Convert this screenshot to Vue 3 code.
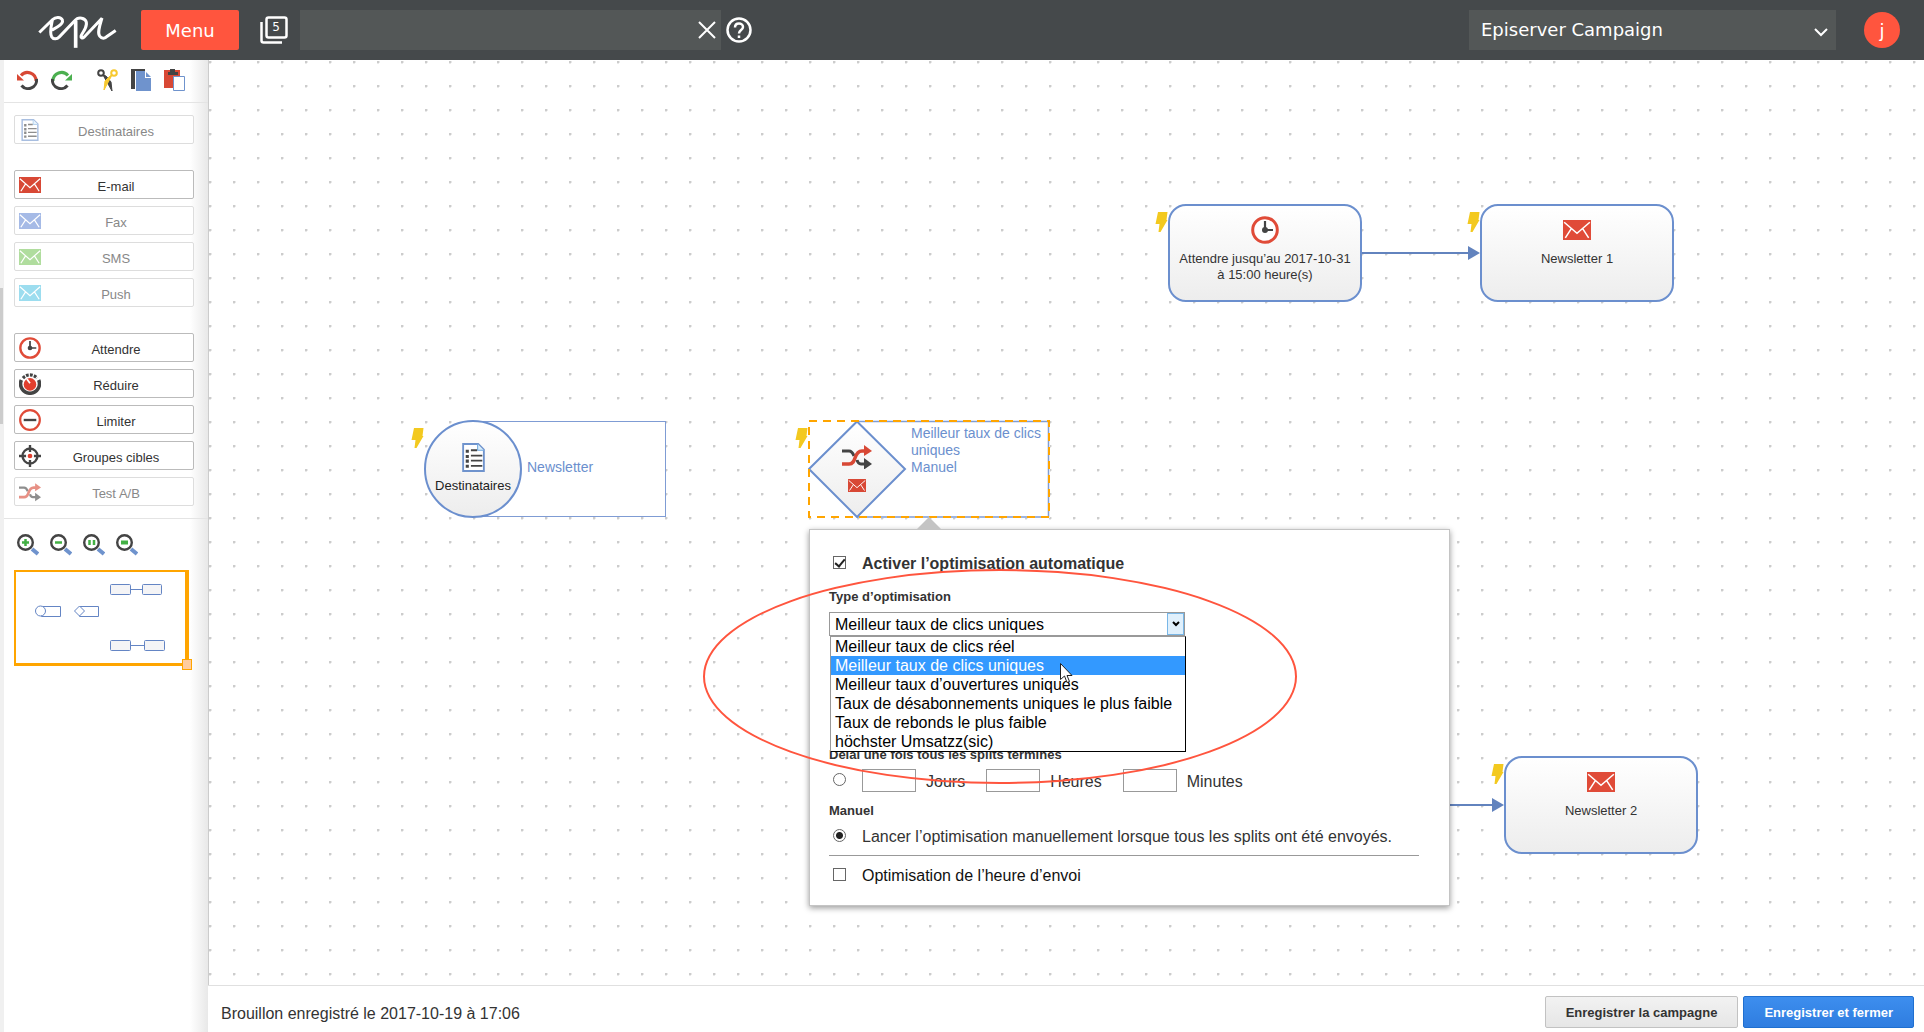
<script setup>
import { ref } from 'vue'

const channels = [
  { label: 'E-mail', kind: 'mail', color: '#d84835' },
  { label: 'Fax', kind: 'mail', color: '#a5bae6', disabled: true },
  { label: 'SMS', kind: 'mail', color: '#b0dd9e', disabled: true },
  { label: 'Push', kind: 'mail', color: '#9cddef', disabled: true },
]
const steps = [
  { label: 'Attendre', kind: 'clock' },
  { label: 'Réduire', kind: 'knob' },
  { label: 'Limiter', kind: 'minus' },
  { label: 'Groupes cibles', kind: 'target' },
  { label: 'Test A/B', kind: 'shuffle', disabled: true },
]
const groups = [
  [{ label: 'Destinataires', kind: 'doc', disabled: true }],
  channels,
  steps,
]
const zooms = [
  { label: 'Zoom avant', kind: 'plus' },
  { label: 'Zoom arrière', kind: 'minus' },
  { label: 'Taille réelle', kind: 'actual' },
  { label: 'Ajuster', kind: 'fit' },
]
const boxes = [
  { x: 959, y: 144, kind: 'clock', text: 'Attendre jusqu’au 2017-10-31 à 15:00 heure(s)' },
  { x: 1271, y: 144, kind: 'mail', text: 'Newsletter 1' },
  { x: 1295, y: 696, kind: 'mail', text: 'Newsletter 2' },
]
const bolts = [
  { x: 946, y: 152 },
  { x: 1258, y: 152 },
  { x: 1282, y: 704 },
  { x: 202, y: 368 },
  { x: 586, y: 368 },
]
const arrows = [
  { x: 1153, y: 186, w: 118 },
  { x: 1177, y: 738, w: 118 },
]
const options = [
  'Meilleur taux de clics réel',
  'Meilleur taux de clics uniques',
  'Meilleur taux d’ouvertures uniques',
  'Taux de désabonnements uniques le plus faible',
  'Taux de rebonds le plus faible',
  'höchster Umsatzz(sic)',
]
const optimisation = ref(options[1])
const automatic = ref(true)
const sendTime = ref(false)
const trigger = ref('manual')
const units = ['Jours', 'Heures', 'Minutes']
const query = ref('')
</script>

<template>
  <div class="app">
    <svg class="symbols" aria-hidden="true">
      <symbol id="mail" viewBox="0 0 24 18" preserveAspectRatio="none">
        <rect width="24" height="18" fill="currentColor" />
        <path d="M1 2l11 10L23 2M2 16l5-8M22 16l-5-8" fill="none" stroke="#fff" stroke-width="1.3" />
      </symbol>
      <symbol id="clock" viewBox="0 0 28 28">
        <circle cx="14" cy="14" r="12.3" fill="#fff" stroke="#e04b38" stroke-width="3" />
        <path d="M14 5v9h8" fill="none" stroke="#444" stroke-width="2.2" />
        <circle cx="14" cy="14" r="3" fill="#444" />
      </symbol>
      <symbol id="knob" viewBox="0 0 28 28">
        <path d="M3 9a12 12 0 1 0 22 0" fill="none" stroke="#444" stroke-width="4.500" />
        <path d="M5 6.500a12 12 0 0 1 18 0" fill="none" stroke="#444" stroke-width="4" stroke-dasharray="3.500 1.500" />
        <circle cx="14" cy="14.500" r="8" fill="#e23f2e" />
        <path d="M10 7.500l4 5.500" stroke="#fff" stroke-width="2.200" />
      </symbol>
      <symbol id="minus" viewBox="0 0 28 28">
        <circle cx="14" cy="14" r="12.5" fill="#fff" stroke="#e04b38" stroke-width="2.800" />
        <path d="M6 14h16" stroke="#444" stroke-width="3" />
      </symbol>
      <symbol id="target" viewBox="0 0 28 28">
        <circle cx="14" cy="14" r="9.500" fill="#fff" stroke="#444" stroke-width="3" />
        <path d="M14 0v9M14 19v9M0 14h9M19 14h9" stroke="#444" stroke-width="3" />
        <circle cx="14" cy="14" r="3" fill="#e23f2e" />
      </symbol>
      <symbol id="shuffle" viewBox="0 0 30 24">
        <path d="M0 6h7q3 0 5 5M15 15q1 4 4 4h5" fill="none" stroke="#444" stroke-width="3" />
        <path d="M22 13l8 6-8 5.500z" fill="#444" />
        <path d="M0 19h7c4 0 5-3 6-6s3-7 7-7h4" fill="none" stroke="#d84835" stroke-width="3.500" />
        <path d="M22 0l8 6-8 5z" fill="#d84835" />
      </symbol>
      <symbol id="doc" viewBox="0 0 22 28">
        <path d="M1 1h14.500l5.500 5.500V27H1z" fill="#fff" stroke="#6f93cd" stroke-width="1.800" />
        <path d="M15 1v6h6" fill="#d9eefb" stroke="#6fa8e0" />
        <path d="M8.500 7h6M8.500 12.300h11M8.500 17h11M8.500 22h11" stroke="#444" stroke-width="1.700" />
        <path d="M3.500 8h3M3.500 13h3M3.500 17.500h3M3.500 22.500h3" stroke="#444" stroke-width="3" />
      </symbol>
      <symbol id="bolt" viewBox="0 0 12 20">
        <path d="M2.500 0H12l-1 8h1L5 20H3l1-8H0z" fill="#f3c91f" />
      </symbol>
    </svg>

    <header class="topbar">
      <a class="logo" href="#" aria-label="Episerver">
        <svg viewBox="24 28 240 104" width="80" height="35" fill="none" stroke="#fff" stroke-width="9">
          <path d="M28 83L68 44c9-9 25-8 29 1 3 9-4 15-14 21L66 76M67 46c-3 16-9 38-2 50 6 9 16 7 23 0L134 48c5-6 12-10 21-8 14 3 18 14 11 30-4 10-11 17-13 24-1 5 4 8 9 3L216 40c-6 20-15 44-7 54 7 9 16 7 23 0l25-17" />
          <path d="M137 48V129" stroke-width="11" />
        </svg>
      </a>
      <button class="menu" type="button">Menu</button>
      <button class="bare tabs" type="button" aria-label="Onglets">
        <svg viewBox="0 0 28 28" width="28" height="28" fill="none" stroke="#fff" stroke-width="2.500">
          <rect x="6.500" y="1.500" width="20" height="20" rx="2" />
          <path d="M1.500 6v18.500q0 2 2 2H22" />
        </svg>
        <span>5</span>
      </button>
      <div class="search">
        <input v-model="query" type="text" aria-label="Recherche">
        <button class="bare" type="button" aria-label="Effacer">
          <svg viewBox="0 0 18 18" width="18" height="18" stroke="#fff" stroke-width="2"><path d="M1 1l16 16M17 1L1 17" /></svg>
        </button>
      </div>
      <button class="bare help" type="button" aria-label="Aide">
        <svg viewBox="0 0 26 26" width="26" height="26" fill="none" stroke="#fff" stroke-width="2.500">
          <circle cx="13" cy="13" r="11.500" />
          <path d="M9 10.500c0-5.500 8-5 8-.5 0 3-4 3-4 6.500" />
          <path d="M13 18.500v2.500" />
        </svg>
      </button>
      <div class="product">
        <select aria-label="Produit"><option>Episerver Campaign</option></select>
        <svg viewBox="0 0 14 9" width="14" height="9" fill="none" stroke="#fff" stroke-width="2"><path d="M1 1l6 6 6-6" /></svg>
      </div>
      <button class="avatar" type="button">j</button>
    </header>

    <div class="body">
      <aside class="sidebar">
        <div class="tools">
          <button class="bare" type="button" aria-label="Annuler">
            <svg viewBox="0 0 21 21" width="21" height="21" fill="none" stroke-width="3">
              <path d="M4 5.500a8.500 8.500 0 0 1 15 5.500" stroke="#d84835" /><path d="M19.500 9a8.500 8.500 0 0 1-15 6.500" stroke="#444" />
              <path d="M0 4v6.500h7z" fill="#d84835" />
            </svg>
          </button>
          <button class="bare" type="button" aria-label="Rétablir">
            <svg viewBox="0 0 21 21" width="21" height="21" fill="none" stroke-width="3">
              <path d="M17 5.500a8.500 8.500 0 0 0-15 5.500" stroke="#4cb050" /><path d="M1.500 9a8.500 8.500 0 0 0 15 6.500" stroke="#444" />
              <path d="M21 4v6.500h-7z" fill="#4cb050" />
            </svg>
          </button>
          <button class="bare cut" type="button" aria-label="Couper">
            <svg viewBox="0 0 21 22" width="21" height="22" fill="none">
              <path d="M6 6l9 16-1-9-5-6z" fill="#444" stroke="#444" />
              <path d="M15 6L7 21l1-9 5-5z" fill="#f7c92f" stroke="#f7c92f" />
              <circle cx="4" cy="4" r="2.800" stroke="#444" stroke-width="2" /><circle cx="17" cy="4" r="2.800" stroke="#f7c92f" stroke-width="2" />
            </svg>
          </button>
          <button class="bare" type="button" aria-label="Copier">
            <svg viewBox="0 0 20 22" width="20" height="22">
              <path d="M0 0h14v2H4v18H0z" fill="#444" /><path d="M5 2h9v7h6v13H5z" fill="#6f93cd" /><path d="M15 3l5 5h-5z" fill="#6f93cd" />
            </svg>
          </button>
          <button class="bare" type="button" aria-label="Coller">
            <svg viewBox="0 0 21 22" width="21" height="22">
              <path d="M0 1h16v18H0z" fill="#d84835" /><path d="M4 3h2V0h5v3h3v3H4z" fill="#444" /><path d="M9.500 7.500h11v14h-11z" fill="#fff" stroke="#6f93cd" />
            </svg>
          </button>
        </div>

        <div class="palette">
          <div v-for="(group, g) in groups" :key="g" class="group">
            <button v-for="item in group" :key="item.label" class="item" type="button" :disabled="item.disabled">
              <svg :class="['item-icon', item.kind]" :style="{ color: item.color }"><use :href="'#' + item.kind" /></svg>
              <span>{{ item.label }}</span>
            </button>
          </div>
        </div>

        <div class="overview">
          <div class="zooms">
            <button v-for="z in zooms" :key="z.label" class="bare" type="button" :aria-label="z.label">
              <svg viewBox="0 0 22 22" width="22" height="22">
                <path d="M15 15l6 5" stroke="#6f93cd" stroke-width="4" />
                <circle cx="8.500" cy="8.500" r="7.300" fill="#fff" stroke="#444" stroke-width="2.400" />
                <g stroke="#43b045" stroke-width="2.500">
                  <path v-if="z.kind === 'plus'" d="M5 8.500h7M8.500 5v7" />
                  <path v-else-if="z.kind === 'minus'" d="M5 8.500h7" />
                  <path v-else-if="z.kind === 'actual'" d="M6.500 6v5M11 6v5" />
                  <path v-else stroke-width="4" d="M5 8.500h7" />
                </g>
              </svg>
            </button>
          </div>
          <div class="minimap">
            <svg viewBox="16 572 169 91" width="169" height="91" fill="#fff" stroke="#6485c4">
              <path d="M41.500 606.500h19v10h-19zM79.500 606.500h19v10h-19z" />
              <circle cx="40.500" cy="611" r="5" /><path d="M74.500 611l5-5 5 5-5 5z" />
              <path d="M131 589.500h11M131 645.500h13" />
              <g fill="#f4f4f6">
                <rect x="110.500" y="584.500" width="20" height="10" rx="1" /><rect x="142.500" y="584.500" width="19" height="10" rx="1" />
                <rect x="110.500" y="640.500" width="20" height="10" rx="1" /><rect x="144.500" y="640.500" width="20" height="10" rx="1" />
              </g>
            </svg>
            <span class="handle"></span>
          </div>
        </div>
      </aside>

      <main class="workspace">
        <div class="canvas">
          <svg v-for="a in arrows" :key="a.y" class="arrow" :width="a.w" height="14" :style="{ left: a.x + 'px', top: a.y + 'px' }">
            <path :d="`M0 7H${a.w - 10}`" stroke="#6283be" stroke-width="2" />
            <path :d="`M${a.w - 12} 0L${a.w} 7L${a.w - 12} 14z`" fill="#6283be" />
          </svg>
          <svg v-for="b in bolts" :key="b.x" class="bolt" :style="{ left: b.x + 'px', top: b.y + 'px' }"><use href="#bolt" /></svg>
          <div v-for="b in boxes" :key="b.x" class="box" :style="{ left: b.x + 'px', top: b.y + 'px' }">
            <svg :class="['box-icon', b.kind]"><use :href="'#' + b.kind" /></svg>
            <p>{{ b.text }}</p>
          </div>

          <div class="start">
            <div class="disc">
              <svg class="doc"><use href="#doc" /></svg>
              <p>Destinataires</p>
            </div>
            <p class="note">Newsletter</p>
          </div>

          <div class="split">
            <svg class="split-shape" viewBox="0 0 242 98" width="242" height="98" fill="none">
              <defs><linearGradient id="shade" x2="0" y2="1"><stop stop-color="#fff" /><stop offset="1" stop-color="#ededed" /></linearGradient></defs>
              <path d="M49 1.500H240.500V97H49" stroke="#7f9cd4" stroke-width="1.500" />
              <path d="M49 1.500L97 49 49 97 1 49z" fill="url(#shade)" stroke="#6b8fce" stroke-width="2" />
              <rect x="1" y="1" width="240" height="96" stroke="#ffa500" stroke-width="2" stroke-dasharray="8 6" />
            </svg>
            <div class="diamond">
              <svg class="shuffle"><use href="#shuffle" /></svg>
              <svg class="mail"><use href="#mail" /></svg>
            </div>
            <p>Meilleur taux de clics uniques<br>Manuel</p>
          </div>

          <form class="popover" @submit.prevent>
            <label class="row title"><input v-model="automatic" type="checkbox"><span>Activer l’optimisation automatique</span></label>
            <label class="caption" for="kind">Type d’optimisation</label>
            <div class="combo">
              <select id="kind" v-model="optimisation"><option v-for="o in options" :key="o">{{ o }}</option></select>
              <span class="drop"><svg viewBox="0 0 8 6" width="8" height="6" fill="none" stroke="#000" stroke-width="2"><path d="M1 1l3 3 3-3" /></svg></span>
              <ul class="options" role="listbox" aria-label="Type d’optimisation">
                <li v-for="o in options" :key="o" role="option" :aria-selected="o === optimisation" :class="{ chosen: o === optimisation }">{{ o }}</li>
              </ul>
            </div>
            <p class="caption delay">Délai une fois tous les splits terminés</p>
            <div class="row">
              <input v-model="trigger" type="radio" value="delay" aria-label="Délai une fois tous les splits terminés">
              <label v-for="u in units" :key="u" class="unit"><input type="text"><span>{{ u }}</span></label>
            </div>
            <p class="caption manual">Manuel</p>
            <label class="row"><input v-model="trigger" type="radio" value="manual"><span>Lancer l’optimisation manuellement lorsque tous les splits ont été envoyés.</span></label>
            <hr>
            <label class="row last"><input v-model="sendTime" type="checkbox"><span>Optimisation de l’heure d’envoi</span></label>
          </form>

          <div class="highlight"></div>
          <svg class="cursor" viewBox="0 0 13 21" width="13" height="21"><path d="M.5 .5v16l4-3.500 2.500 6.500 2.500-1-2.500-6h5z" fill="#fff" stroke="#222" /></svg>
        </div>

        <footer class="footer">
          <p>Brouillon enregistré le 2017-10-19 à 17:06</p>
          <button class="save" type="button">Enregistrer la campagne</button>
          <button class="save primary" type="button">Enregistrer et fermer</button>
        </footer>
      </main>
    </div>
  </div>
</template>

<style>
body { margin: 0; background: #fff; }
</style>

<style scoped>
.app { display: flex; flex-direction: column; min-height: 100vh; font-family: "Liberation Sans", Arial, sans-serif; color: #333; }
.app * { box-sizing: border-box; }
p { margin: 0; }
svg { display: block; flex: none; }
.symbols { position: absolute; width: 0; height: 0; }
button, input, select { font: inherit; color: inherit; }
.bare { display: flex; padding: 0; border: 0; background: none; }

.topbar { display: flex; align-items: center; height: 60px; background: #45494b; color: #fff; font-family: "DejaVu Sans", Verdana, sans-serif; font-size: 18px; }
.logo { margin: 2px 0 0 38px; }
.menu { width: 98px; height: 40px; margin-left: 23px; padding: 0; border: 0; border-radius: 2px; background: #ff553e; }
.tabs { position: relative; margin-left: 21px; font-size: 12px; }
.tabs span { position: absolute; left: 6px; top: 4px; width: 20px; line-height: 14px; text-align: center; }
.search { display: flex; align-items: center; width: 421px; height: 40px; margin-left: 12px; padding-right: 5px; background: #535757; }
.search input { flex: 1; min-width: 0; height: 40px; padding: 0 12px; border: 0; background: none; outline: 0; }
.help { margin-left: 5px; }
.product { display: flex; align-items: center; position: relative; width: 367px; height: 40px; margin-left: auto; background: #535757; }
.product select { width: 100%; height: 40px; padding: 0 12px 2px; border: 0; appearance: none; background: none; }
.product svg { position: absolute; right: 8px; top: 18px; pointer-events: none; }
.avatar { width: 36px; height: 36px; margin: 0 24px 0 28px; padding: 0; border: 0; border-radius: 50%; background: #ff553e; }

.body { display: flex; flex: 1; }
.sidebar { position: relative; flex: none; width: 208px; padding-left: 4px; background: linear-gradient(to right, #f0f0f0 4px, #fff 4px, #fff 190px, #e8e8e8 208px); }
.sidebar::before { content: ""; position: absolute; left: 0; top: 228px; width: 3px; height: 136px; background: #ccc; }
.tools { display: flex; align-items: center; gap: 13px; height: 43px; padding: 0 0 2px 13px; border-bottom: 1px solid #e4e4e4; }
.tools .cut { margin-left: 12px; }
.palette { display: flex; flex-direction: column; gap: 26px; padding: 12px 14px 12px 10px; border-bottom: 1px solid #e4e4e4; }
.group { display: flex; flex-direction: column; gap: 7px; }
.item { display: flex; align-items: center; width: 180px; height: 29px; padding: 0 2px 0 4px; border: 1px solid #bbb; border-radius: 2px; background: #fff; font-size: 13px; line-height: 16px; }
.item:disabled { border-color: #ddd; color: #888; }
.item span { flex: 1; padding-top: 4px; text-align: center; }
.item-icon { width: 22px; height: 22px; }
.item-icon.mail { height: 16px; }
.item:disabled .doc, .item:disabled .shuffle { opacity: .6; }
.overview { padding: 15px 10px; }
.zooms { display: flex; gap: 11px; padding-left: 3px; }
.minimap { position: relative; width: 175px; margin-top: 14px; border: solid #ffa500; border-width: 2px 4px 3px 2px; background: #fff; }
.handle { position: absolute; right: -7px; bottom: -7px; width: 10px; height: 11px; border: 1px solid #ffa500; background: #ffcc9f; }

.workspace { display: flex; flex: 1; flex-direction: column; min-width: 0; }
.canvas { position: relative; flex: 1; overflow: hidden; border-left: 1px solid #ccc; background: radial-gradient(circle at 1px 1px, #ccc 1px, transparent 2px) 0 1px / 24px 24px; }
.arrow, .bolt, .box, .start, .split, .popover, .highlight, .cursor { position: absolute; }
.bolt { width: 13px; height: 20px; }
.box { display: flex; flex-direction: column; align-items: center; width: 194px; height: 98px; padding: 10px 6px; border: 2px solid #6b8fce; border-radius: 18px; background: linear-gradient(#fff, #ededed); font-size: 13px; line-height: 16px; text-align: center; }
.box-icon { width: 28px; height: 28px; color: #e04b38; }
.box-icon.mail { height: 20px; margin: 4px 0; }
.box p { padding-top: 7px; }
.start { left: 215px; top: 360px; display: flex; align-items: center; width: 242px; height: 98px; }
.start::before { content: ""; position: absolute; left: 48px; top: 1px; right: 0; bottom: 1px; border: 1px solid #7f9cd4; background: #fff; }
.disc { position: relative; display: flex; flex-direction: column; align-items: center; width: 98px; height: 98px; padding-top: 21px; border: 2px solid #6b8fce; border-radius: 50%; background: linear-gradient(#fff, #ededed); font-size: 13px; line-height: 16px; color: #222; }
.disc .doc { width: 23px; height: 29px; }
.disc p { padding-top: 6px; }
.note { position: relative; padding: 0 0 4px 5px; font-size: 14px; line-height: 17px; color: #6b8fce; }
.split { left: 599px; top: 360px; display: flex; width: 242px; height: 98px; padding-top: 5px; background: #fff; font-size: 14px; line-height: 17px; color: #6b8fce; }
.split-shape { position: absolute; left: 0; top: 0; }
.diamond { position: relative; display: flex; flex-direction: column; align-items: center; flex: none; width: 98px; padding-top: 20px; color: #d84835; }
.diamond .shuffle { width: 30px; height: 24px; }
.diamond .mail { width: 18px; height: 13px; margin-top: 10px; }
.split p { position: relative; padding-left: 5px; }

.popover { left: 600px; top: 469px; width: 641px; height: 377px; padding: 24px 30px 0 19px; border: 1px solid #c4c4c4; background: #fff; box-shadow: 0 2px 6px rgba(0, 0, 0, .4); font-size: 16px; line-height: 19px; }
.popover::before { content: ""; position: absolute; left: 107px; top: -13px; border: solid transparent; border-width: 0 12px 12px; border-bottom-color: #c4c4c4; }
.row { display: flex; align-items: center; }
.row > input { display: grid; place-items: center; appearance: none; flex: none; width: 13px; height: 13px; margin: 0 16px 3px 4px; border: 1px solid #666; background: #fff; }
.row > input[type="radio"] { border-radius: 50%; }
.row > input[type="radio"]:checked { background: radial-gradient(circle, #222 3px, #fff 4px); }
.row > input[type="checkbox"]:checked::after { content: ""; width: 4px; height: 8px; margin-bottom: 2px; border: solid #222; border-width: 0 2px 2px 0; transform: rotate(40deg); }
.title { font-weight: bold; }
.caption { display: block; margin-top: 16px; font-size: 13px; line-height: 16px; font-weight: bold; }
.combo { position: relative; width: 356px; margin-top: 7px; color: #000; }
.combo select { display: block; width: 100%; height: 24px; padding: 0 5px; border: 1px solid #999; border-radius: 0; appearance: none; background: #fff; }
.drop { position: absolute; right: 1px; top: 1px; display: grid; place-items: center; width: 17px; height: 22px; border: 1px solid #79b7e7; background: #e0f0fc; pointer-events: none; }
.options { position: absolute; left: 1px; top: 24px; width: 356px; margin: 0; padding: 0; border: 1px solid #000; border-color: #999 #000 #000 #999; background: #fff; list-style: none; }
.options li { height: 19px; padding-left: 4px; }
.options .chosen { background: #3399ff; color: #fff; }
.delay { margin: 111px 0 6px; }
.unit { display: flex; align-items: center; margin-right: 21px; }
.unit input { width: 54px; height: 23px; margin: 0 10px 0 0; padding: 0 4px; border: 1px solid #999; background: #fff; }
.unit span { padding-top: 2px; }
.manual { margin: 11px 0 8px; }
.popover hr { margin: 9px 0 10px; border: 0; border-top: 1px solid #999; }
.last { color: #111; }
.highlight { left: 494px; top: 509px; width: 594px; height: 215px; border: 2px solid #ff553e; border-radius: 50%; pointer-events: none; }
.cursor { left: 851px; top: 603px; pointer-events: none; }

.footer { display: flex; align-items: center; gap: 5px; height: 47px; padding: 8px 10px 0 13px; border-top: 1px solid #e0e0e0; background: #fff; }
.footer p { margin-right: auto; padding-top: 2px; font-size: 16px; line-height: 20px; }
.save { height: 32px; margin-bottom: 2px; padding: 0 20px; border: 1px solid #c2c2c2; border-radius: 2px; background: linear-gradient(#f2f2f2, #e6e6e6); font-size: 13px; font-weight: bold; }
.primary { border-color: #1f6fd0; background: linear-gradient(#3d8eee, #2f7de0); color: #fff; }
</style>
